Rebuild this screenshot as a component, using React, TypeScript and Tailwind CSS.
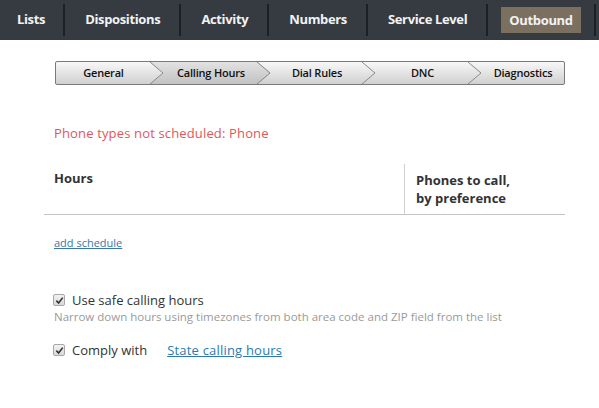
import React from 'react';

const NAV = ['Lists', 'Dispositions', 'Activity', 'Numbers', 'Service Level'];

const STEPS = [
  { label: 'General', w: 'w-[95px]', pad: '' },
  { label: 'Calling Hours', w: 'w-[107px]', pad: 'pl-[13px]', active: true },
  { label: 'Dial Rules', w: 'w-[105px]', pad: 'pl-[13px]' },
  { label: 'DNC', w: 'w-[106px]', pad: 'pl-[13px]' },
  { label: 'Diagnostics', w: 'flex-1', pad: 'pl-[13px]', last: true },
];

const Check: React.FC = () => (
  <span className="w-[12px] h-[12px] rounded-[2px] border border-[#a8a8a8] bg-gradient-to-b from-[#f2f2f2] to-[#d9d9d9] flex items-center justify-center shrink-0">
    <svg className="w-[9px] h-[9px]" viewBox="0 0 10 10">
      <path d="M1.5 5.2 L4 7.8 L8.6 1.8" fill="none" stroke="#333" strokeWidth={1.8} />
    </svg>
  </span>
);

const App: React.FC = () => {
  return (
    <div className="w-[599px] h-[408px] bg-white font-['Open_Sans',sans-serif] overflow-hidden">
      {/* top nav */}
      <div className="h-10 bg-[#363b42] flex items-center whitespace-nowrap">
        {NAV.map((item, i) => (
          <React.Fragment key={item}>
            <span className={`${i === 0 ? 'pl-[17px] pr-[18px]' : 'pl-[20px] pr-[19px]'} text-[13px] font-bold text-[#f2f2f2] tracking-[-0.35px]`}>
              {item}
            </span>
            <span className="w-[2px] h-[32px] bg-[#1c1f23]" />
          </React.Fragment>
        ))}
        <span className="px-[13px]">
          <span className="block h-[26px] px-2 bg-[#7b6f60] text-[13px] font-bold text-[#f2f2f2] leading-[26px] tracking-[-0.35px]">
            Outbound
          </span>
        </span>
        <span className="w-[2px] h-[32px] bg-[#1c1f23]" />
      </div>

      <div className="ml-[44px] w-[521px]">
        {/* wizard steps */}
        <div className="ml-[11px] mt-[21px] h-[24px] flex border border-[#7a7a7a] rounded-[2px] bg-gradient-to-b from-[#f8f8f8] to-[#d0d0d0] overflow-hidden">
          {STEPS.map(s => (
            <div key={s.label} className={`relative ${s.w} ${s.pad} flex items-center justify-center`}>
              {s.active && (
                <div className="absolute top-0 bottom-0 -left-[1px] -right-[13px] bg-gradient-to-b from-[#e2e2e2] to-[#c2c2c2] [clip-path:polygon(0_0,calc(100%-13px)_0,100%_50%,calc(100%-13px)_100%,0_100%,13px_50%)]" />
              )}
              <span className="relative text-[11px] font-semibold text-[#111] tracking-[-0.2px]">{s.label}</span>
              {!s.last && (
                <svg className="absolute top-0 -right-[13px] z-10 w-[14px] h-[22px]" viewBox="0 0 14 22" preserveAspectRatio="none">
                  <polyline points="0,0 13,11 0,22" fill="none" stroke="#8a8a8a" strokeWidth={1} />
                </svg>
              )}
            </div>
          ))}
        </div>

        <p className="mt-[39px] pl-[10px] text-[13px] leading-[18px] text-[#e0575b] tracking-[0.15px]">
          Phone types not scheduled: Phone
        </p>

        {/* schedule table header */}
        <div className="mt-[22px] flex border-b border-[#c4c4c4] h-[51px]">
          <div className="w-[360px] pl-[10px] pt-[5px] text-[13px] leading-[18px] font-bold text-[#333]">Hours</div>
          <div className="border-l border-[#d0d0d0] pl-[11px] pt-[7px] text-[13px] leading-[18px] font-bold text-[#333]">
            Phones to call,
            <br />
            by preference
          </div>
        </div>

        <a href="#" className="block mt-[20px] ml-[10px] w-fit text-[11px] leading-[16px] text-[#3b76ab] underline">
          add schedule
        </a>

        <label className="mt-[40px] ml-[9px] flex items-center gap-[7px] text-[13px] leading-[18px] text-[#333]">
          <Check />
          Use safe calling hours
        </label>
        <p className="ml-[10px] text-[11.5px] leading-[16px] text-[#9a9a9a]">
          Narrow down hours using timezones from both area code and ZIP field from the list
        </p>

        <label className="mt-[16px] ml-[9px] flex items-center gap-[7px] text-[13px] leading-[18px] text-[#333]">
          <Check />
          Comply with
          <a href="#" className="ml-[13px] text-[#2a79b5] underline tracking-[0.2px]">State calling hours</a>
        </label>
      </div>
    </div>
  );
};

export default App;
